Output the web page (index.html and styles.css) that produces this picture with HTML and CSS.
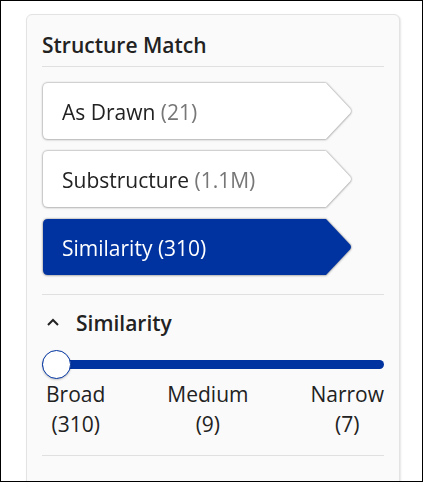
FILE: index.html
```html
<!DOCTYPE html>
<html>
<head>
<meta charset="utf-8">
<link rel="stylesheet" href="styles.css">
</head>
<body>
<div class="frame">
  <div class="card">
    <h2 class="title">Structure Match</h2>
    <div class="options">
      <div class="opt"><div class="opt-shape"><span class="lbl">As Drawn</span> <span class="cnt">(21)</span></div></div>
      <div class="opt"><div class="opt-shape"><span class="lbl">Substructure</span> <span class="cnt">(1.1M)</span></div></div>
      <div class="opt active"><div class="opt-shape"><span class="lbl">Similarity</span> <span class="cnt">(310)</span></div></div>
    </div>
    <div class="section">
      <div class="sec-head">
        <svg class="chev" width="14" height="10" viewBox="0 0 14 10"><path d="M2 8 L7 3 L12 8" fill="none" stroke="#222" stroke-width="2"/></svg>
        <span>Similarity</span>
      </div>
      <div class="slider">
        <div class="track"></div>
        <div class="thumb"></div>
      </div>
      <div class="ticks">
        <div class="tick">Broad<br>(310)</div>
        <div class="tick">Medium<br>(9)</div>
        <div class="tick">Narrow<br>(7)</div>
      </div>
    </div>
  </div>
</div>
</body>
</html>
```
FILE: styles.css
```css
* { box-sizing: border-box; }
html, body { margin: 0; padding: 0; background: #fff; }
body { font-family: "Open Sans", "Noto Sans", sans-serif; color: #222; }
.frame {
  width: 423px;
  height: 482px;
  border: 1px solid #000;
  overflow: hidden;
  padding: 13px 0 0 25px;
}
.card {
  width: 374px;
  height: 520px;
  background: #fafafa;
  border: 1px solid #e3e3e3;
  border-radius: 6px;
  box-shadow: 1px 1px 2px rgba(0,0,0,0.10);
  padding: 16px 15px 0 15px;
}
.title {
  margin: 0;
  font-size: 21px;
  font-weight: 600;
  line-height: 28px;
  padding-bottom: 7px;
  border-bottom: 1px solid #e0e0e0;
}
.options {
  display: flex;
  flex-direction: column;
  gap: 12px;
  padding: 16px 0 19px 1px;
  border-bottom: 1px solid #e0e0e0;
}
.opt {
  width: 309px;
  height: 56px;
  filter: drop-shadow(0 0 0.8px rgba(0,0,0,0.45)) drop-shadow(0 1px 1px rgba(0,0,0,0.12));
}
.opt-shape {
  width: 309px;
  height: 56px;
  background: #fff;
  clip-path: path("M5,0 H283 L307,25.5 Q309,28 307,30.5 L283,56 H5 Q0,56 0,51 V5 Q0,0 5,0 Z");
  padding: 3px 0 0 19px;
  line-height: 53px;
  font-size: 21px;
  white-space: nowrap;
}
.cnt { color: #777; }
.active .opt-shape { background: #0033a0; }
.active .opt-shape .lbl, .active .opt-shape .cnt { color: #fff; }
.section {
  padding-top: 14px;
  padding-bottom: 16px;
  border-bottom: 1px solid #e0e0e0;
}
.sec-head {
  display: flex;
  align-items: center;
  gap: 16px;
  padding-left: 4px;
  font-size: 21px;
  font-weight: 600;
  line-height: 28px;
}
.chev { display: block; margin-top: -2px; }
.slider {
  position: relative;
  height: 29px;
  margin-top: 13px;
  padding-top: 10px;
}
.track {
  height: 9px;
  background: #0033a0;
  border-radius: 5px;
}
.thumb {
  position: absolute;
  left: 0;
  top: 0;
  width: 29px;
  height: 29px;
  border-radius: 50%;
  background: #fff;
  border: 1px solid #0033a0;
  box-shadow: 0 1px 2px rgba(0,0,0,0.2);
}
.ticks {
  display: flex;
  justify-content: space-between;
  padding-left: 4px;
  font-size: 21px;
  line-height: 30px;
  margin-top: 0;
}
.tick { text-align: center; }
```
